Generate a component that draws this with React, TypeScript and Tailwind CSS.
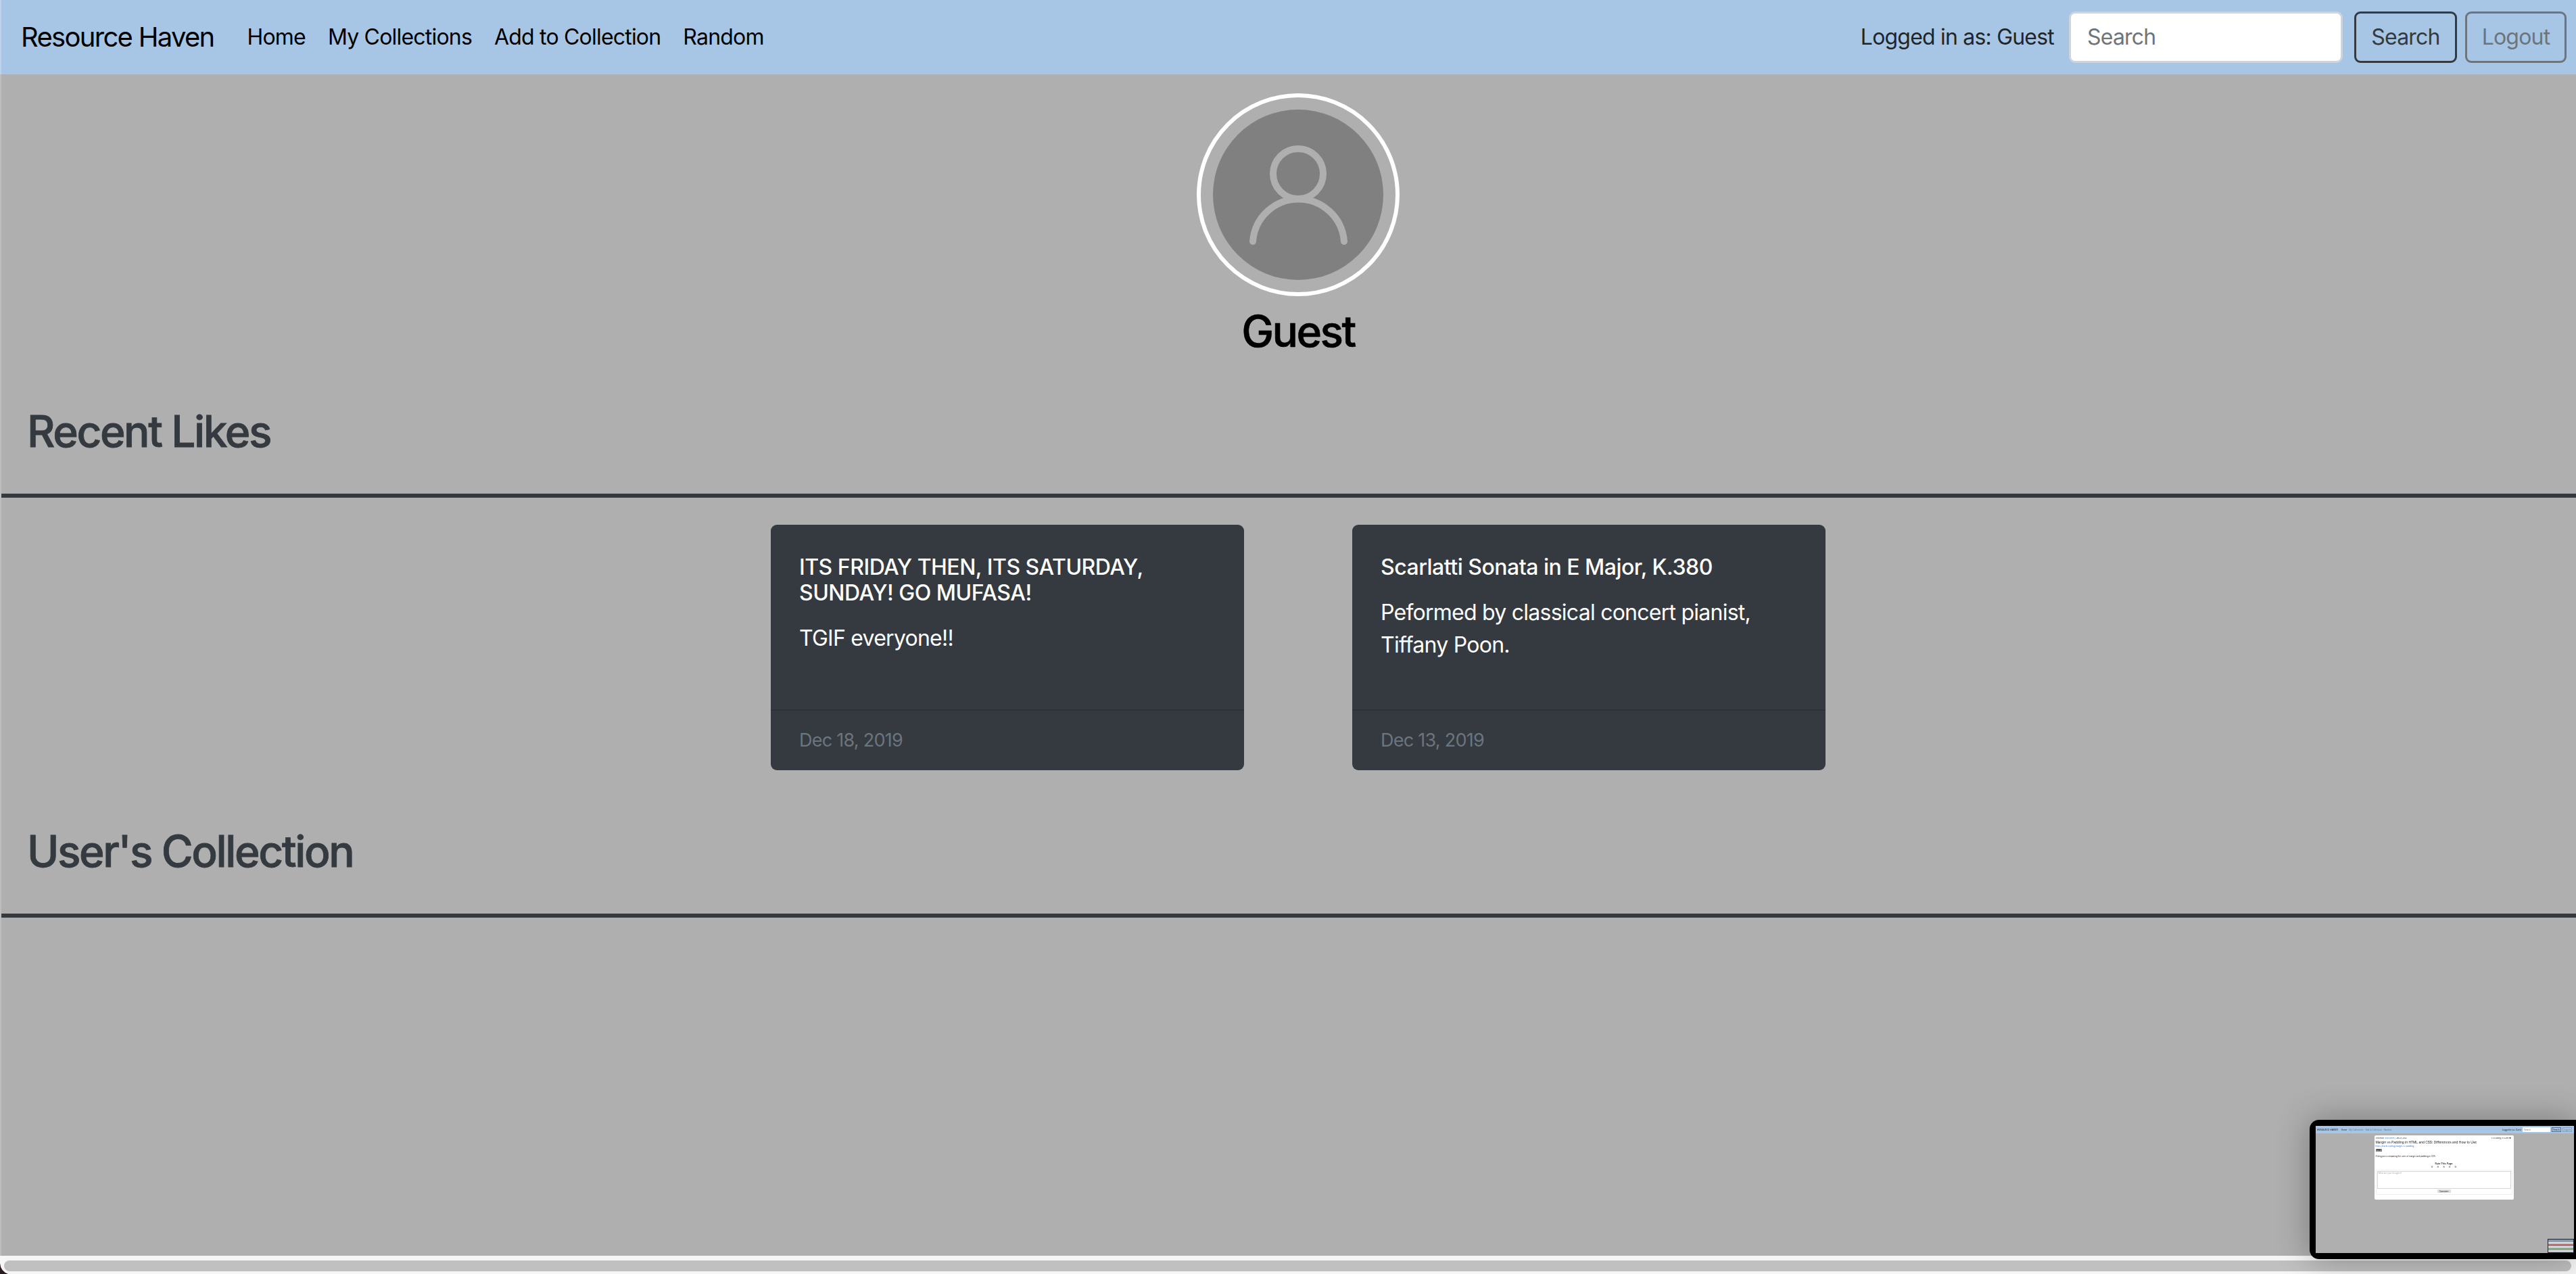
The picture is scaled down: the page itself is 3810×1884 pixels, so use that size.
function Thumbnail() {
  return (
    <div className="absolute left-[3416px] top-[1656px] w-[394px] h-[206px] bg-black rounded-l-[14px] pl-[9px] pt-[9px] pr-[3px] pb-[9px] shadow-[0_0_50px_rgba(0,0,0,0.3)]">
      <div className="relative h-full w-full bg-[#afafaf] overflow-hidden flex flex-col text-[3px] leading-[4px] text-[#222]">
        <div className="h-[11px] shrink-0 bg-[#a7c6e5] flex items-center pl-[2px] pr-[3px] blur-[0.3px]">
          <span className="text-[4px] mr-[5px]">Resource Haven</span>
          <span className="mr-[3px]">Home</span>
          <span className="mr-[3px] text-[#5b7189]">My Collections</span>
          <span className="mr-[3px] text-[#5b7189]">Add to Collection</span>
          <span className="text-[#5b7189]">Random</span>
          <span className="ml-auto mr-[2px]">Logged in as: Guest</span>
          <span className="w-[41px] h-[7px] bg-white text-[#777] px-[2px] flex items-center mr-[2px]">Search</span>
          <span className="w-[14px] h-[7px] border-[0.5px] border-[#5b7189] flex items-center justify-center mr-[2px]">Search</span>
          <span className="w-[14px] h-[7px] border-[0.5px] border-[#8ba2b8] text-[#777] flex items-center justify-center">Logout</span>
        </div>
        <div className="self-center mt-[3px] ml-[-3px] w-[206px] h-[95px] bg-white rounded-[2px] px-[2px] pt-[2px] blur-[0.3px]">
          <div className="flex justify-between px-[0.5px] text-[2.6px]"><span>Posted by: <span className="text-[#2a7de1]">Bob Marley</span> | Jan 27, 2022</span><span className="mr-[1px]">3.33 Rating | 41 Likes ♥</span></div>
          <div className="text-[4.8px] leading-[7px] mt-[1px] text-[#222] whitespace-nowrap">Margin vs Padding in HTML and CSS: Differences and How to Use</div>
          <div className="text-[#2a7de1] leading-[4px]">https://hackr.io/blog/margin-vs-padding</div>
          <div className="mt-[2px] w-[9px] h-[4px] bg-[#888] text-black text-[2.4px] flex items-center justify-center">blogs</div>
          <div className="mt-[5px]">A blog post comparing the uses of margin and padding in CSS.</div>
          <div className="mt-[7px] text-center text-[3.6px] font-semibold">Rate This Page</div>
          <div className="flex justify-center gap-[4px] text-[4.5px] leading-[6px] text-[#999]">
            <span>★</span><span>★</span><span>★</span><span>★</span><span>★</span>
          </div>
          <div className="mt-[1px] border-[0.5px] border-[#eeeeee] rounded-[1px] p-[1px] h-[37px] flex flex-col items-center">
            <div className="w-full h-[26px] border-[0.5px] border-[#d5d5d5] px-[1px] text-[#aaa]">What are your thoughts?</div>
            <div className="mt-[1px] w-[20px] h-[5px] bg-[#dedede] rounded-[1px] flex items-center justify-center">Comment</div>
          </div>
        </div>
        <div className="absolute right-0 bottom-0 w-[39px] h-[21px] bg-[#989ea6] border-[1.5px] border-[#22262b] flex flex-col gap-[1px] blur-[0.2px]">
          <div className="h-[2px] bg-[#7f9ab8]" />
          <div className="h-[2px] bg-[#e4e4e4] mt-[1px]" />
          <div className="h-[2px] bg-[#c06a6a]" />
          <div className="h-[2px] bg-[#e4e4e4]" />
          <div className="h-[2px] bg-[#88b088]" />
          <div className="h-[2px] bg-[#e4e4e4]" />
        </div>
      </div>
    </div>
  );
}

function SectionHeading({ children }: { children: string }) {
  return (
    <div>
      <h2 className="pl-[38px] text-[64px] leading-[77px] font-medium [-webkit-text-stroke:0.8px_#343a40] tracking-[-2.4px] text-[#343a40]">{children}</h2>
      <div className="mt-[54px] h-[6px] bg-[#343a40]" />
    </div>
  );
}

function Card({ title, body, date }: { title: string; body: string; date: string }) {
  return (
    <div className="w-[700px] h-[363px] bg-[#343a40] rounded-[9px] flex flex-col text-white tracking-[-0.75px]">
      <div className="flex-1 px-[42px] pt-[44px]">
        <h5 className="text-[32px] leading-[38px] font-medium tracking-[-0.5px]">{title}</h5>
        <p className="mt-[24px] text-[32px] leading-[48px]">{body}</p>
      </div>
      <div className="h-[90px] border-t-2 border-[#2e3339] px-[42px] flex items-center text-[27px] text-[#6c757d]">{date}</div>
    </div>
  );
}

export default function App() {
  return (
    <div className="relative w-[3810px] h-[1884px] overflow-hidden bg-[#afafaf] flex flex-col font-['Inter',sans-serif]">
      <nav className="h-[110px] shrink-0 bg-[#a7c6e5] border-l-2 border-[#bcd3ea] flex items-center pl-[29px] pr-[14px] text-[32px] tracking-[-0.8px] text-black">
        <span className="text-[40px] tracking-[-1.7px] mr-[49px]">Resource Haven</span>
        <div className="flex gap-[33px]">
          <span>Home</span>
          <span>My Collections</span>
          <span>Add to Collection</span>
          <span>Random</span>
        </div>
        <span className="ml-auto mr-[22px] text-[#212529]">Logged in as: Guest</span>
        <div className="w-[405px] h-[76px] bg-white border-[3px] border-[#ced4da] rounded-[9px] flex items-center pl-[24px] text-[#6c757d] mr-[17px]">Search</div>
        <button className="w-[152px] h-[76px] border-[3px] border-[#343a40] rounded-[9px] text-[#343a40] mr-[12px]">Search</button>
        <button className="w-[150px] h-[76px] border-[3px] border-[#6c757d] rounded-[9px] text-[#6c757d]">Logout</button>
      </nav>

      <main className="flex-1 border-l-2 border-[#bdbdbd]">
        <div className="flex flex-col items-center pt-[28px] pl-[28px]">
          <div className="w-[300px] h-[300px] rounded-full border-[6px] border-white flex items-center justify-center">
            <svg width="252" height="252" viewBox="0 0 252 252" fill="none">
              <circle cx="126" cy="126" r="126" fill="#808080" />
              <circle cx="126" cy="95" r="37" stroke="#afafaf" strokeWidth="10" />
              <path d="M59 195A67.7 67.7 0 0 1 194 195" stroke="#afafaf" strokeWidth="10" strokeLinecap="round" />
            </svg>
          </div>
          <h1 className="mt-[13px] text-[64px] leading-[77px] font-medium [-webkit-text-stroke:0.6px_#000] tracking-[-2.5px] text-black">Guest</h1>
        </div>
        <div className="mt-[71px]">
          <SectionHeading>Recent Likes</SectionHeading>
        </div>
        <div className="flex justify-center gap-[160px] mt-[40px] pl-[28px]">
          <Card title="ITS FRIDAY THEN, ITS SATURDAY, SUNDAY! GO MUFASA!" body="TGIF everyone!!" date="Dec 18, 2019" />
          <Card title="Scarlatti Sonata in E Major, K.380" body="Peformed by classical concert pianist, Tiffany Poon." date="Dec 13, 2019" />
        </div>
        <div className="mt-[81px]">
          <SectionHeading>User's Collection</SectionHeading>
        </div>
      </main>

      <div className="h-[27px] shrink-0 bg-[#f6f6f6] pt-[7px] pl-[6px] pr-[7px]">
        <div className="h-[16px] bg-[#c0c0c0] rounded-full" />
      </div>

      <svg className="absolute left-0 bottom-0" width="12" height="16" viewBox="0 0 12 16">
        <path d="M0 0Q1 12 12 16L0 16Z" fill="#2a1a22" />
      </svg>

      <Thumbnail />
    </div>
  );
}
